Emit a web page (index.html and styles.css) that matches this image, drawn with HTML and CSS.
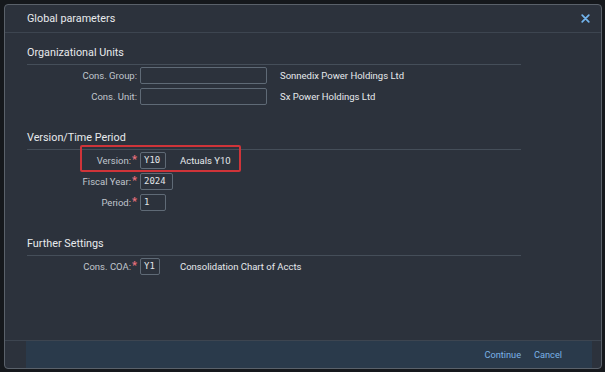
FILE: index.html
```html
<!DOCTYPE html>
<html>
<head>
<meta charset="utf-8">
<link rel="stylesheet" href="styles.css">
</head>
<body>
<div class="dialog">
  <div class="header">
    <span class="title">Global parameters</span>
    <svg class="close" width="9" height="9" viewBox="0 0 9 9"><path d="M1.2 1.2L7.8 7.8M7.8 1.2L1.2 7.8" stroke="#72b4ee" stroke-width="1.7" stroke-linecap="round"/></svg>
  </div>
  <div class="content">
    <section class="sec">
      <h2 class="sec-title">Organizational Units</h2>
      <div class="row">
        <label class="lbl">Cons. Group:</label>
        <div class="inp w-long"></div>
        <span class="desc d-long">Sonnedix Power Holdings Ltd</span>
      </div>
      <div class="row">
        <label class="lbl">Cons. Unit:</label>
        <div class="inp w-long"></div>
        <span class="desc d-long">Sx Power Holdings Ltd</span>
      </div>
    </section>
    <section class="sec">
      <h2 class="sec-title">Version/Time Period</h2>
      <div class="row">
        <label class="lbl">Version:<span class="req">*</span></label>
        <div class="inp w-3">Y10</div>
        <span class="desc d-3">Actuals Y10</span>
        <div class="highlight"></div>
      </div>
      <div class="row">
        <label class="lbl">Fiscal Year:<span class="req">*</span></label>
        <div class="inp w-4">2024</div>
      </div>
      <div class="row">
        <label class="lbl">Period:<span class="req">*</span></label>
        <div class="inp w-3">1</div>
      </div>
    </section>
    <section class="sec">
      <h2 class="sec-title">Further Settings</h2>
      <div class="row">
        <label class="lbl">Cons. COA:<span class="req">*</span></label>
        <div class="inp w-2">Y1</div>
        <span class="desc d-2">Consolidation Chart of Accts</span>
      </div>
    </section>
  </div>
  <div class="footer">
    <div class="bar">
      <a class="btn">Continue</a>
      <a class="btn">Cancel</a>
    </div>
  </div>
</div>
</body>
</html>
```
FILE: styles.css
```css
* { box-sizing: border-box; }
html, body { margin: 0; padding: 0; }
body {
  background: #15181c;
  width: 605px;
  height: 372px;
  padding: 4px 3px 3px 4px;
  font-family: Roboto, "Liberation Sans", Arial, sans-serif;
  overflow: hidden;
}
.dialog {
  width: 598px;
  height: 365px;
  background: #2c323c;
  border: 1px solid #5a616a;
  border-radius: 4px;
  display: flex;
  flex-direction: column;
  overflow: hidden;
}
.header {
  height: 28px;
  border-bottom: 1px solid #3d4550;
  display: flex;
  align-items: center;
  justify-content: space-between;
  padding: 0 11px 0 22px;
  flex-shrink: 0;
}
.title {
  color: #e8eaed;
  font-size: 10.8px;
}
.close { display: block; }
.content {
  flex: 1;
  padding: 12px 0 0 22px;
}
.sec { width: 494px; margin-bottom: 23px; }
.sec-title {
  margin: 0;
  font-weight: normal;
  font-size: 10.8px;
  color: #e8eaed;
  line-height: 16px;
  padding-bottom: 3px;
  border-bottom: 1px solid #454e59;
}
.row {
  position: relative;
  display: flex;
  align-items: center;
  height: 21px;
}
.lbl {
  width: 113px;
  text-align: right;
  padding-right: 3px;
  font-size: 9.5px;
  color: #c0c6cd;
  display: flex;
  justify-content: flex-end;
  align-items: center;
}
.req {
  color: #e8707c;
  font-size: 11px;
  font-weight: bold;
  line-height: 1;
  margin-left: 1px;
  position: relative;
  top: -1px;
}
.inp {
  height: 17px;
  border: 1px solid #5f6a76;
  border-radius: 2px;
  font-family: "DejaVu Sans Mono", monospace;
  font-size: 9px;
  color: #e2e5e8;
  line-height: 15px;
  padding-left: 3px;
}
.w-long { width: 127px; }
.w-3 { width: 26px; }
.w-4 { width: 33px; }
.w-2 { width: 20px; }
.desc {
  font-size: 9.5px;
  color: #e6e9ec;
}
.d-long { margin-left: 13px; }
.d-3 { margin-left: 14px; }
.d-2 { margin-left: 20px; }
.highlight {
  position: absolute;
  left: 53px;
  top: -5px;
  width: 161px;
  height: 27px;
  border: 2px solid #cf3439;
  border-radius: 2px;
}
.footer {
  height: 28px;
  border-top: 1px solid #3d4550;
  padding: 0 9px 0 21px;
  flex-shrink: 0;
}
.bar {
  height: 100%;
  background: #2a3a4b;
  display: flex;
  align-items: center;
  justify-content: flex-end;
  gap: 13px;
  padding-right: 30px;
}
.btn {
  color: #7bb2e6;
  font-size: 9.2px;
}
```
